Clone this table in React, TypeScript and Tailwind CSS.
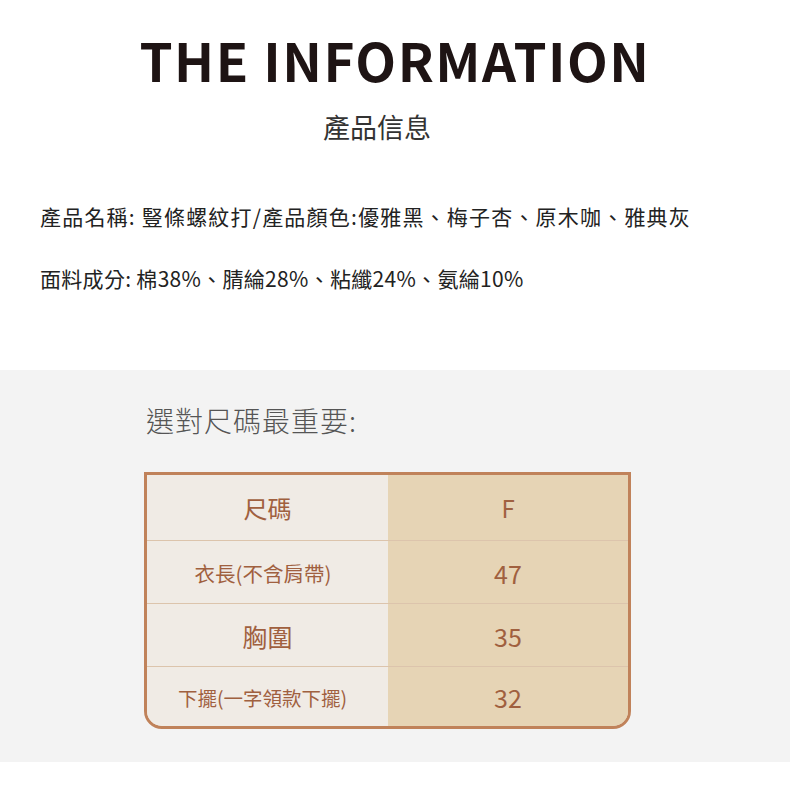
const rows = [
  { label: "衣長(不含肩帶)", value: "47", size: "text-[20.5px] pr-[9px]", h: "h-[62px]" },
  { label: "胸圍", value: "35", size: "text-[25px]", h: "h-[62px]" },
  { label: "下擺(一字領款下擺)", value: "32", size: "text-[19.5px] pr-[10px]", h: "h-[59px]" },
];

const cjk = { fontFamily: '"Noto Sans CJK TC", "Noto Sans CJK SC", sans-serif' };

export default function App() {
  return (
    <div className="min-h-[809px] w-[790px] bg-white" style={cjk}>
      <section className="h-[370px] pt-[27px]">
        <h1 className="text-center text-[53px] font-bold leading-[64px] tracking-[1.5px] text-[#1e1414]">
          THE INFORMATION
        </h1>
        <p className="mt-[18px] pr-[36px] text-center text-[27px] leading-[36px] text-[#333]">產品信息</p>
        <div className="mt-[56px] pl-[40px] text-[21px] leading-[30px] text-[#222]">
          <p className="tracking-[1.2px]">產品名稱: 豎條螺紋打/產品顏色:優雅黑、梅子杏、原木咖、雅典灰</p>
          <p className="mt-[32px] tracking-[0.3px]">面料成分: 棉38%、腈綸28%、粘纖24%、氨綸10%</p>
        </div>
      </section>

      <section className="h-[392px] bg-[#f3f3f3] pl-[144px] pt-[32px]">
        <p className="pl-[2px] text-[28px] font-light leading-[36px] tracking-[1px] text-[#555]">選對尺碼最重要:</p>
        <div className="mt-[34px] w-[487px] overflow-hidden rounded-b-[18px] border-[3px] border-[#c0825a] text-[#a0603f] shadow-[inset_0_0_0_1px_#ead7c2]">
          <div className="grid grid-cols-[241px_1fr] border-b border-[#dcc4ac]">
            <div className="flex h-[65px] items-center justify-center bg-[#f0ebe5] text-[24px]">尺碼</div>
            <div className="flex h-[65px] items-center justify-center bg-[#e6d4b5] text-[24px]">F</div>
          </div>
          {rows.map((r, i) => (
            <div
              key={r.value}
              className={`grid grid-cols-[241px_1fr] ${i < rows.length - 1 ? "border-b border-[#dcc4ac]" : ""}`}
            >
              <div className={`flex ${r.h} items-center justify-center bg-[#f0ebe5] pt-[3px] ${r.size}`}>{r.label}</div>
              <div className={`flex ${r.h} items-center justify-center bg-[#e6d4b5] pt-[3px] text-[25px]`}>{r.value}</div>
            </div>
          ))}
        </div>
      </section>
    </div>
  );
}
